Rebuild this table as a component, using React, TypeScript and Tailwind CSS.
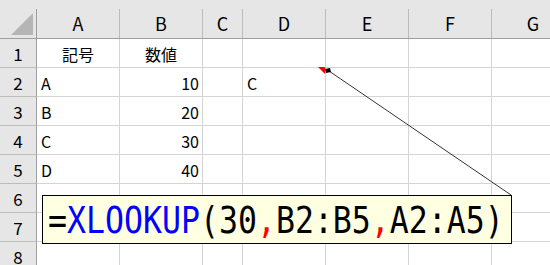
import React from 'react';

const cols = [
    {name: 'A', w: 'w-[83px]'},
    {name: 'B', w: 'w-[83px]'},
    {name: 'C', w: 'w-[40px]'},
    {name: 'D', w: 'w-[83px]'},
    {name: 'E', w: 'w-[83px]'},
    {name: 'F', w: 'w-[83px]'},
    {name: 'G', w: 'w-[83px]'},
];

type Cell = {text: string; align?: 'left' | 'right' | 'center'; comment?: boolean};

const rows: Record<number, Record<string, Cell>> = {
    1: {A: {text: '記号', align: 'center'}, B: {text: '数値', align: 'center'}},
    2: {A: {text: 'A'}, B: {text: '10', align: 'right'}, D: {text: 'C', comment: true}},
    3: {A: {text: 'B'}, B: {text: '20', align: 'right'}},
    4: {A: {text: 'C'}, B: {text: '30', align: 'right'}},
    5: {A: {text: 'D'}, B: {text: '40', align: 'right'}},
};

const alignClass = {
    left: 'justify-start pl-[4px]',
    right: 'justify-end pr-[3px]',
    center: 'justify-center',
};

function HeaderRow() {
    return (
        <div className="flex h-[39px] shrink-0 bg-[#e6e6e6] border-b border-[#9e9e9e] pt-[9px]">
            <div className="relative w-[37px] h-[29px] shrink-0 border-r border-[#9e9e9e]">
                <svg className="absolute left-0 top-0" width="36" height="29">
                    <polygon points="11,26 33,4 33,26" fill="#b5b5b5" />
                </svg>
            </div>
            {cols.map((c) => (
                <div
                    key={c.name}
                    className={`${c.w} h-[29px] shrink-0 flex items-center justify-center text-[18px] border-r border-[#bcbcbc]`}
                >
                    {c.name}
                </div>
            ))}
        </div>
    );
}

function Row({n}: {n: number}) {
    const data = rows[n] || {};
    return (
        <div className="flex h-[29px] shrink-0">
            <div className="w-[37px] shrink-0 flex items-center justify-center pt-[1px] text-[17px] bg-[#e6e6e6] border-r border-b border-r-[#9e9e9e] border-b-[#bcbcbc]">
                {n}
            </div>
            {cols.map((c) => {
                const cell = data[c.name];
                return (
                    <div
                        key={c.name}
                        className={`relative ${c.w} shrink-0 flex items-center pt-[2px] border-r border-b border-[#d4d4d4] ${
                            alignClass[cell?.align || 'left']
                        }`}
                    >
                        {cell?.text}
                        {cell?.comment && (
                            <span className="absolute -top-px right-0 w-0 h-0 border-l-[7px] border-l-transparent border-t-[7px] border-t-[#ff0000]" />
                        )}
                    </div>
                );
            })}
        </div>
    );
}

export default function App() {
    return (
        <div className="relative w-[550px] h-[265px] overflow-hidden bg-white text-black text-[16px] font-['Noto_Sans_CJK_JP',sans-serif]">
            <HeaderRow />
            {[1, 2, 3, 4, 5, 6, 7, 8].map((n) => (
                <Row key={n} n={n} />
            ))}

            <svg className="absolute inset-0 pointer-events-none" width="550" height="265">
                <line x1="511" y1="195" x2="329" y2="71" stroke="#333" strokeWidth="1" />
                <polygon points="325,69 330,68 331,72 326,73" fill="#000" />
            </svg>

            <div className="absolute left-[42px] top-[195px] w-[470px] h-[49px] bg-[#ffffe1] border border-black flex items-center pl-[5px] overflow-hidden">
                <span className="inline-block origin-left scale-x-[0.83] whitespace-nowrap text-[38px] leading-none font-['DejaVu_Sans_Mono',monospace]">
                    <span>=</span>
                    <span className="text-[#0000ff]">XLOOKUP</span>
                    <span>(30</span>
                    <span className="text-[#ff0000]">,</span>
                    <span>B2:B5</span>
                    <span className="text-[#ff0000]">,</span>
                    <span>A2:A5)</span>
                </span>
            </div>
        </div>
    );
}
